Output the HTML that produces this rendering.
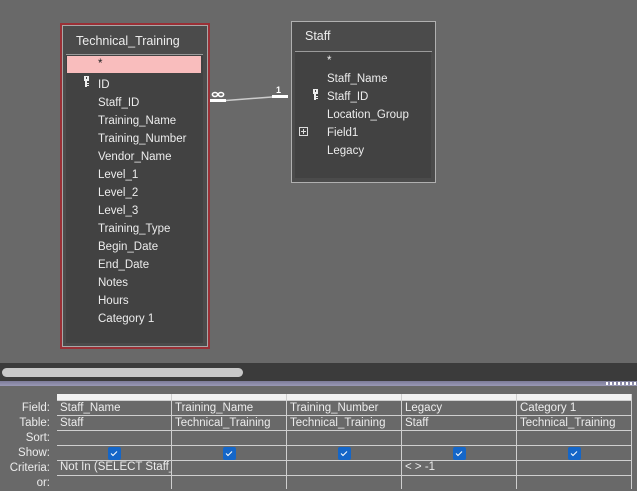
<!DOCTYPE html>
<html><head><style>
*{margin:0;padding:0;box-sizing:border-box}
body{width:637px;height:489px;background:#696969;position:relative;overflow:hidden;font-family:"Liberation Sans",sans-serif;font-size:11.5px;color:#ececec}
.a{position:absolute;white-space:nowrap}
</style></head><body>
<div class="a" style="left:60px;top:23px;width:150px;height:326px;border:2px solid #9a3036;background:#4b4b4b"></div>
<div class="a" style="left:62px;top:25px;width:146px;height:322px;border:1px solid #a8a8a8;background:#4b4b4b"></div>
<div class="a" style="left:76px;top:34px;font-size:12.5px">Technical_Training</div>
<div class="a" style="left:66px;top:54px;width:137px;height:1px;background:#9a9a9a"></div>
<div class="a" style="left:66px;top:55px;width:137px;height:288px;background:#424242"></div>
<div class="a" style="left:67px;top:56px;width:134px;height:17px;background:#f9bdbd"></div>
<div class="a" style="left:98px;top:58px;color:#222">*</div>
<svg class="a" style="left:83px;top:76px" width="8" height="12"><rect x="1" y="0" width="5" height="5" fill="#eee"/><rect x="2" y="5" width="2" height="6" fill="#eee"/><rect x="4" y="7" width="2" height="1" fill="#eee"/><rect x="4" y="9" width="2" height="1" fill="#eee"/><rect x="3" y="1" width="1" height="2" fill="#444"/></svg>
<div class="a" style="left:98px;top:76px;line-height:18px">ID<br>Staff_ID<br>Training_Name<br>Training_Number<br>Vendor_Name<br>Level_1<br>Level_2<br>Level_3<br>Training_Type<br>Begin_Date<br>End_Date<br>Notes<br>Hours<br>Category 1</div>
<div class="a" style="left:291px;top:21px;width:145px;height:162px;border:1px solid #b0b0b0;background:#4b4b4b"></div>
<div class="a" style="left:305px;top:29px;font-size:12.5px">Staff</div>
<div class="a" style="left:295px;top:51px;width:137px;height:1px;background:#9a9a9a"></div>
<div class="a" style="left:295px;top:52px;width:136px;height:126px;background:#424242"></div>
<div class="a" style="left:327px;top:52px;line-height:18px">*<br>Staff_Name<br>Staff_ID<br>Location_Group<br>Field1<br>Legacy</div>
<svg class="a" style="left:312px;top:89px" width="8" height="12"><rect x="1" y="0" width="5" height="5" fill="#eee"/><rect x="2" y="5" width="2" height="6" fill="#eee"/><rect x="4" y="7" width="2" height="1" fill="#eee"/><rect x="4" y="9" width="2" height="1" fill="#eee"/><rect x="3" y="1" width="1" height="2" fill="#444"/></svg>
<svg class="a" style="left:299px;top:127px" width="10" height="10"><rect x="0.5" y="0.5" width="8" height="8" fill="none" stroke="#ddd"/><path d="M2 4.5H7M4.5 2V7" stroke="#ddd"/></svg>
<svg class="a" style="left:205px;top:85px" width="90" height="22"><rect x="5" y="14" width="16" height="3" fill="#fff"/><path d="M21 15.5L67 12" stroke="#ccc" stroke-width="1.5"/><rect x="67" y="10" width="16" height="3" fill="#fff"/><ellipse cx="10" cy="9.5" rx="2.6" ry="2" fill="none" stroke="#fff" stroke-width="1.6"/><ellipse cx="16" cy="9.5" rx="2.6" ry="2" fill="none" stroke="#fff" stroke-width="1.6"/><text x="71" y="8" font-size="9" font-weight="bold" fill="#fff" font-family="Liberation Sans">1</text></svg>
<div class="a" style="left:0;top:363px;width:637px;height:18px;background:#3b3b3b"></div>
<div class="a" style="left:2px;top:368px;width:241px;height:9px;border-radius:5px;background:#c8c8c8"></div>
<div class="a" style="left:0;top:381px;width:637px;height:5px;background:linear-gradient(#7c7b98,#9a99b6)"></div>
<div class="a" style="left:606px;top:382px;width:31px;height:3px;background:repeating-linear-gradient(90deg,#fff 0 2px,transparent 2px 4px)"></div>
<div class="a" style="left:57px;top:394px;width:575px;height:6px;background:#f2f2f2"></div>
<svg class="a" style="left:0;top:0" width="637" height="489">
<g stroke="#cfcfcf" stroke-width="1">
<path d="M57 415.5H632M57 430.5H632M57 445.5H632M57 460.5H632M57 475.5H632M57 400.5H632"/>
<path d="M171.5 394V489M286.5 394V489M401.5 394V489M516.5 394V489M631.5 394V489"/>
</g>
<g fill="#1466c8"><rect x="108" y="447" width="13" height="13" rx="2"/><rect x="223" y="447" width="13" height="13" rx="2"/><rect x="338" y="447" width="13" height="13" rx="2"/><rect x="453" y="447" width="13" height="13" rx="2"/><rect x="568" y="447" width="13" height="13" rx="2"/></g>
<g stroke="#fff" fill="none" stroke-width="1"><path d="M111 453.5l2 2 4-4M226 453.5l2 2 4-4M341 453.5l2 2 4-4M456 453.5l2 2 4-4M571 453.5l2 2 4-4"/></g>
</svg>
<div class="a" style="left:0;top:401px;width:50px;text-align:right;line-height:15px">Field:<br>Table:<br>Sort:<br>Show:<br>Criteria:<br>or:</div>
<div class="a" style="left:60px;top:401px;line-height:15px">Staff_Name<br>Staff</div>
<div class="a" style="left:175px;top:401px;line-height:15px">Training_Name<br>Technical_Training</div>
<div class="a" style="left:290px;top:401px;line-height:15px">Training_Number<br>Technical_Training</div>
<div class="a" style="left:405px;top:401px;line-height:15px">Legacy<br>Staff</div>
<div class="a" style="left:520px;top:401px;line-height:15px">Category 1<br>Technical_Training</div>
<div class="a" style="left:60px;top:461px;width:111px;overflow:hidden">Not In (SELECT Staff_Name</div>
<div class="a" style="left:405px;top:461px">&lt; &gt; -1</div>
</body></html>
